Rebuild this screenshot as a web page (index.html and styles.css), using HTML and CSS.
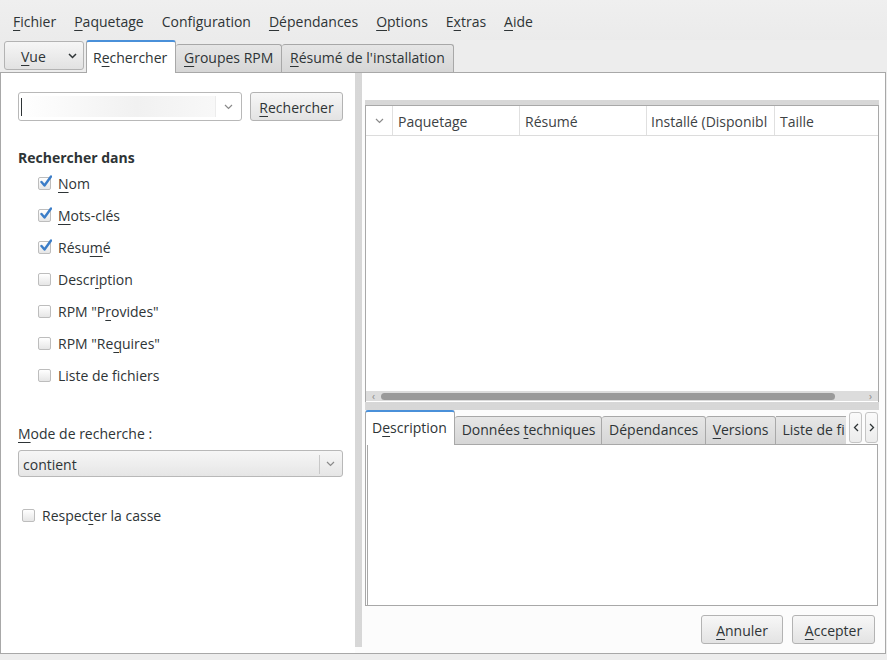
FILE: index.html
```html
<!DOCTYPE html>
<html lang="fr">
<head>
<meta charset="utf-8">
<title>Yumex</title>
<link rel="stylesheet" href="styles.css">
</head>
<body>
<div class="menubar">
  <span class="menu"><u>F</u>ichier</span>
  <span class="menu"><u>P</u>aquetage</span>
  <span class="menu">Configuration</span>
  <span class="menu"><u>D</u>épendances</span>
  <span class="menu"><u>O</u>ptions</span>
  <span class="menu">E<u>x</u>tras</span>
  <span class="menu"><u>A</u>ide</span>
</div>
<div class="tabbar">
  <div class="vue"><span><u>V</u>ue</span><svg width="9" height="6" viewBox="0 0 9 6"><path d="M1 1 L4.5 4.5 L8 1" fill="none" stroke="#2e3436" stroke-width="1.5"/></svg></div>
  <div class="tab active"><span>R<u>e</u>chercher</span></div>
  <div class="tab"><span><u>G</u>roupes RPM</span></div>
  <div class="tab"><span><u>R</u>ésumé de l'installation</span></div>
</div>
<div class="frame">
  <div class="left">
    <div class="searchrow">
      <div class="combo-entry">
        <div class="entry-field"><span class="caret"></span></div>
        <div class="entry-arrow"><svg width="9" height="6" viewBox="0 0 9 6"><path d="M1 1 L4.5 4.5 L8 1" fill="none" stroke="#8a8a8a" stroke-width="1.2"/></svg></div>
      </div>
      <div class="btn search-btn"><span><u>R</u>echercher</span></div>
    </div>
    <div class="section-title">Rechercher dans</div>
    <div class="checklist">
      <div class="check-row"><span class="cb checked"></span><span><u>N</u>om</span></div>
      <div class="check-row"><span class="cb checked"></span><span><u>M</u>ots-clés</span></div>
      <div class="check-row"><span class="cb checked"></span><span>Résu<u>m</u>é</span></div>
      <div class="check-row"><span class="cb"></span><span>Descr<u>i</u>ption</span></div>
      <div class="check-row"><span class="cb"></span><span>RPM "P<u>r</u>ovides"</span></div>
      <div class="check-row"><span class="cb"></span><span>RPM "Re<u>q</u>uires"</span></div>
      <div class="check-row"><span class="cb"></span><span>Liste de fichiers</span></div>
    </div>
    <div class="mode-label"><u>M</u>ode de recherche :</div>
    <div class="combo-box">
      <span class="combo-text">contient</span>
      <span class="combo-sep"></span>
      <svg width="9" height="6" viewBox="0 0 9 6"><path d="M1 1 L4.5 4.5 L8 1" fill="none" stroke="#8a8a8a" stroke-width="1.2"/></svg>
    </div>
    <div class="case-row"><span class="cb"></span><span>Respec<u>t</u>er la casse</span></div>
  </div>
  <div class="vhandle"></div>
  <div class="right">
    <div class="topspace"></div>
    <div class="hhandle"></div>
    <div class="tree">
      <div class="thead">
        <div class="th th-arrow"><svg width="9" height="6" viewBox="0 0 9 6"><path d="M1 1 L4.5 4.5 L8 1" fill="none" stroke="#8a8a8a" stroke-width="1.2"/></svg></div>
        <div class="th th-pkg">Paquetage</div>
        <div class="th th-sum">Résumé</div>
        <div class="th th-inst">Installé (Disponibl</div>
        <div class="th th-size">Taille</div>
      </div>
      <div class="tbody"></div>
      <div class="hscroll">
        <span class="sarrow">‹</span>
        <div class="strough"><div class="sslider"></div></div>
        <span class="sarrow">›</span>
      </div>
    </div>
    <div class="hhandle hhandle2"></div>
    <div class="notebook">
      <div class="nbtabs">
        <div class="nbtab active"><span>D<u>e</u>scription</span></div>
        <div class="nbtab"><span>Données <u>t</u>echniques</span></div>
        <div class="nbtab"><span>Dépendances</span></div>
        <div class="nbtab"><span><u>V</u>ersions</span></div>
        <div class="nbtab clip"><span>Liste de fi</span></div>
        <div class="nbscroll"><svg width="6" height="9" viewBox="0 0 6 9"><path d="M5 1 L1.5 4.5 L5 8" fill="none" stroke="#2e3436" stroke-width="1.3"/></svg></div>
        <div class="nbscroll"><svg width="6" height="9" viewBox="0 0 6 9"><path d="M1 1 L4.5 4.5 L1 8" fill="none" stroke="#2e3436" stroke-width="1.3"/></svg></div>
      </div>
      <div class="nbpage"><div class="nbinner"></div></div>
    </div>
    <div class="buttons">
      <div class="btn action-btn"><span><u>A</u>nnuler</span></div>
      <div class="btn action-btn"><span><u>A</u>ccepter</span></div>
    </div>
  </div>
</div>
</body>
</html>
```
FILE: styles.css
```css
* { box-sizing: border-box; }
html, body { margin: 0; padding: 0; }
body {
  width: 887px;
  height: 660px;
  background: #ededed;
  font-family: "Open Sans", "DejaVu Sans", sans-serif;
  font-size: 14px;
  color: #2e3436;
  overflow: hidden;
}
u {
  text-decoration: underline;
  text-decoration-thickness: 1px;
  text-underline-offset: 3px;
}

/* menu bar */
.menubar {
  height: 40px;
  display: flex;
  align-items: center;
  gap: 18px;
  padding-left: 13px;
  padding-top: 3px;
  background: linear-gradient(#efefef, #ebebeb);
}
.menu { white-space: nowrap; }

/* top tab bar */
.tabbar {
  height: 33px;
  display: flex;
  align-items: flex-end;
  padding-left: 4px;
  position: relative;
  z-index: 2;
  margin-bottom: -1px;
}
.vue {
  width: 80px;
  height: 29px;
  margin-bottom: 3px;
  margin-right: 2px;
  border: 1px solid #b3b3b3;
  border-radius: 3px;
  background: linear-gradient(#f6f6f6, #e2e2e2);
  display: flex;
  align-items: center;
  justify-content: space-between;
  padding: 1px 6px 0 16px;
}
.tab {
  height: 28px;
  margin-bottom: 1px;
  padding: 0 8px 3px;
  border: 1px solid #a8a8a8;
  border-bottom: none;
  border-left: none;
  border-radius: 3px 3px 0 0;
  background: linear-gradient(#e6e6e6, #d6d6d6);
  display: flex;
  align-items: center;
  white-space: nowrap;
}
.tab.active {
  height: 33px;
  margin-bottom: 0;
  background: #fff;
  border-left: 1px solid #a8a8a8;
  border-top: 2px solid #4a90d9;
  padding: 0 7px 0 6px;
  width: 90px;
}
.tab:nth-child(3) { width: 106px; }
.tab:nth-child(4) { width: 172px; }

/* main frame */
.frame {
  width: 886px;
  height: 582px;
  border: 1px solid #a8a8a8;
  background: #fcfcfc;
  display: flex;
}
.left {
  width: 354px;
  background: #ffffff;
  padding: 19px 12px 0 17px;
}
.searchrow {
  display: flex;
  gap: 8px;
  height: 29px;
}
.combo-entry {
  width: 224px;
  border: 1px solid #b8b8b8;
  border-radius: 3px;
  background: #fff;
  display: flex;
  overflow: hidden;
}
.entry-field {
  flex: 1;
  background: linear-gradient(90deg, #ffffff 0%, #f1f1f1 60%, #f8f8f8 100%);
  margin: 3px 0;
  display: flex;
  align-items: center;
  padding-left: 2px;
}
.caret {
  width: 1px;
  height: 18px;
  background: #2e3436;
}
.entry-arrow {
  width: 26px;
  border-left: 1px solid #ececec;
  margin: 3px 0;
  display: flex;
  align-items: center;
  justify-content: center;
}
.btn {
  border: 1px solid #b3b3b3;
  border-radius: 3px;
  background: linear-gradient(#f7f7f7, #e3e3e3);
  display: flex;
  align-items: center;
  justify-content: center;
  white-space: nowrap;
  padding-top: 1px;
}
.search-btn { width: 93px; }

.section-title {
  margin-top: 27px;
  height: 20px;
  line-height: 20px;
  font-weight: 700;
}
.checklist { padding-left: 20px; margin-top: -1px; }
.check-row {
  height: 32px;
  display: flex;
  align-items: center;
  gap: 7px;
  white-space: nowrap;
}
.cb {
  width: 13px;
  height: 13px;
  border: 1px solid #bdbdbd;
  border-radius: 2px;
  background: linear-gradient(#ffffff, #e6e6e6);
  position: relative;
  flex: none;
}
.cb.checked::after {
  content: "";
  position: absolute;
  left: 1px;
  top: -3px;
  width: 12px;
  height: 13px;
  background: url("data:image/svg+xml;utf8,<svg xmlns='http://www.w3.org/2000/svg' width='12' height='13' viewBox='0 0 12 13'><path d='M1.5 7 L4.5 10.5 L11 1.5' fill='none' stroke='%233b7dc8' stroke-width='2.4' stroke-linecap='round' stroke-linejoin='round'/></svg>") no-repeat;
}
.mode-label {
  margin-top: 33px;
  height: 20px;
  line-height: 20px;
}
.combo-box {
  margin-top: 6px;
  height: 27px;
  width: 325px;
  border: 1px solid #b8b8b8;
  border-radius: 3px;
  background: linear-gradient(#f6f6f6, #e6e6e6);
  display: flex;
  align-items: center;
  padding: 1px 7px 0 4px;
}
.combo-text { flex: 1; }
.combo-sep {
  width: 1px;
  height: 19px;
  background: #c8c8c8;
  margin-right: 6px;
}
.case-row {
  margin-top: 28px;
  height: 20px;
  display: flex;
  align-items: center;
  gap: 7px;
  padding-left: 4px;
  white-space: nowrap;
}

/* handles */
.vhandle {
  width: 7px;
  height: 574px;
  background-color: #f2f2f2;
  background-image: radial-gradient(circle, #d6d6d6 0.7px, transparent 0.9px);
  background-size: 2px 2px;
}
.right {
  width: 523px;
  padding: 0 9px 0 3px;
  display: flex;
  flex-direction: column;
}
.topspace { height: 27px; background: #fff; margin: 0 -9px 0 -3px; flex: none; }
.hhandle {
  height: 5px;
  width: 514px;
  flex: none;
  background-color: #f2f2f2;
  background-image: radial-gradient(circle, #d6d6d6 0.7px, transparent 0.9px);
  background-size: 2px 2px;
}
.tree {
  height: 297px;
  width: 514px;
  flex: none;
  border: 1px solid #a8a8a8;
  border-bottom: none;
  background: #fff;
  display: flex;
  flex-direction: column;
}
.thead {
  height: 30px;
  display: flex;
  border-bottom: 1px solid #dcdcdc;
  color: #3d4244;
}
.th {
  display: flex;
  align-items: center;
  padding: 2px 0 0 5px;
  border-right: 1px solid #e0e0e0;
  white-space: nowrap;
  overflow: hidden;
}
.th-arrow { width: 27px; justify-content: center; padding: 0; }
.th-pkg { width: 127px; }
.th-sum { width: 127px; }
.th-inst { width: 128px; padding-left: 4px; }
.th-size { flex: 1; border-right: none; }
.tbody { flex: 1; }
.hscroll {
  height: 10px;
  margin-bottom: 1px;
  background: #dcdcdc;
  display: flex;
  align-items: center;
  font-size: 10px;
  color: #888;
}
.sarrow { width: 15px; text-align: center; line-height: 10px; }
.strough { flex: 1; height: 10px; display: flex; align-items: center; }
.sslider {
  width: 454px;
  height: 7px;
  border-radius: 4px;
  background: #9a9a9a;
}
.hhandle2 { height: 8px; }

/* notebook */
.notebook {
  width: 513px;
  flex: none;
  display: flex;
  flex-direction: column;
}
.nbtabs {
  height: 35px;
  display: flex;
  align-items: flex-end;
  position: relative;
  z-index: 1;
  margin-bottom: -1px;
}
.nbtab {
  height: 29px;
  padding: 0 7px 3px;
  border: 1px solid #a8a8a8;
  border-left: none;
  border-radius: 3px 3px 0 0;
  background: linear-gradient(#e6e6e6, #d6d6d6);
  display: flex;
  align-items: center;
  white-space: nowrap;
  overflow: hidden;
}
.nbtab.active {
  height: 35px;
  padding-bottom: 2px;
  background: #fff;
  border-left: 1px solid #a8a8a8;
  border-top: 2px solid #4a90d9;
  border-bottom: none;
  width: 90px;
  padding-left: 6px;
}
.nbtab:nth-child(2) { width: 148px; }
.nbtab:nth-child(3) { width: 104px; }
.nbtab:nth-child(4) { width: 71px; }
.nbtab.clip { width: 70px; border-right: none; border-radius: 0; justify-content: flex-start; padding-left: 6px; }
.nbscroll {
  width: 13px;
  height: 31px;
  margin-bottom: 2px;
  margin-left: 3px;
  border: 1px solid #c4c4c4;
  border-radius: 3px;
  background: linear-gradient(#fafafa, #ececec);
  display: flex;
  align-items: center;
  justify-content: center;
}
.nbpage {
  height: 162px;
  border: 1px solid #a8a8a8;
  background: #fff;
  padding: 0 0 0 1px;
}
.nbinner {
  height: 100%;
  border-left: 1px solid #a8a8a8;
}

.buttons {
  margin-top: 9px;
  display: flex;
  justify-content: flex-end;
  gap: 9px;
  padding-right: 1px;
}
.action-btn {
  height: 29px;
  width: 82px;
}
.action-btn:last-child { width: 83px; }
```
